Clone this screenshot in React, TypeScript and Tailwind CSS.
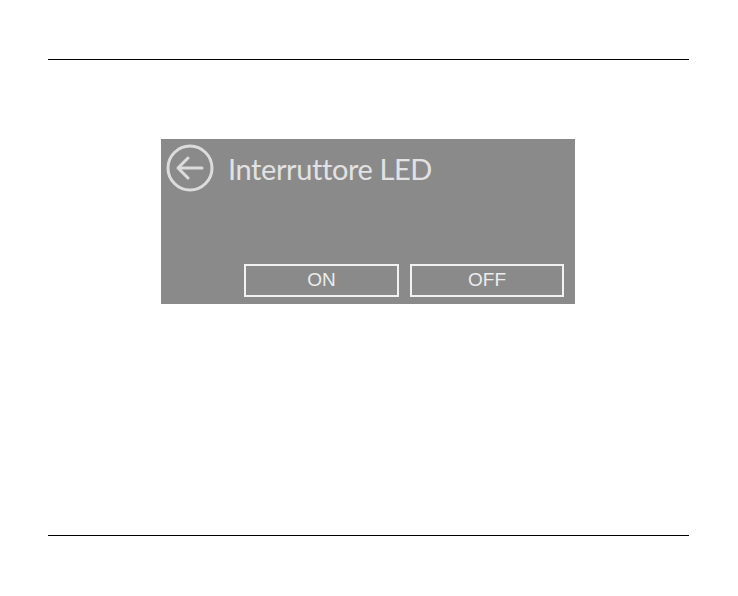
import React from 'react';

const BackIcon = () => (
  <svg width="48" height="48" viewBox="0 0 48 48" fill="none" stroke="#dcdcdc" strokeWidth="3">
    <circle cx="24" cy="24" r="22" />
    <path d="M36 24H12M22 14L12 24L22 34" strokeLinecap="round" strokeLinejoin="round" />
  </svg>
);

export default function App() {
  return (
    <div className="w-[738px] h-[596px] bg-white flex flex-col" style={{ fontFamily: '"Liberation Sans", Arial, sans-serif' }}>
      <div className="mt-[59px] ml-[48px] w-[641px] h-px bg-black" />
      <div className="mt-[79px] ml-[161px] w-[414px] h-[165px] bg-[#8a8a8a] flex flex-col">
        <div className="flex items-center pt-[5px] pl-[5px]">
          <BackIcon />
          <span className="ml-[14px] text-[29px] leading-none text-[#e2e2e2] font-normal tracking-[-0.4px]" style={{ fontFamily: 'Lato, "Open Sans", sans-serif' }}>
            Interruttore LED
          </span>
        </div>
        <div className="mt-auto mb-[7px] ml-[83px] flex gap-[11px]">
          <button className="w-[155px] h-[33px] border-2 border-[#f2f2f2] text-[19px] text-[#ececec] flex items-center justify-center">ON</button>
          <button className="w-[154px] h-[33px] border-2 border-[#f2f2f2] text-[19px] text-[#ececec] flex items-center justify-center">OFF</button>
        </div>
      </div>
      <div className="mt-[231px] ml-[48px] w-[641px] h-px bg-black" />
    </div>
  );
}
